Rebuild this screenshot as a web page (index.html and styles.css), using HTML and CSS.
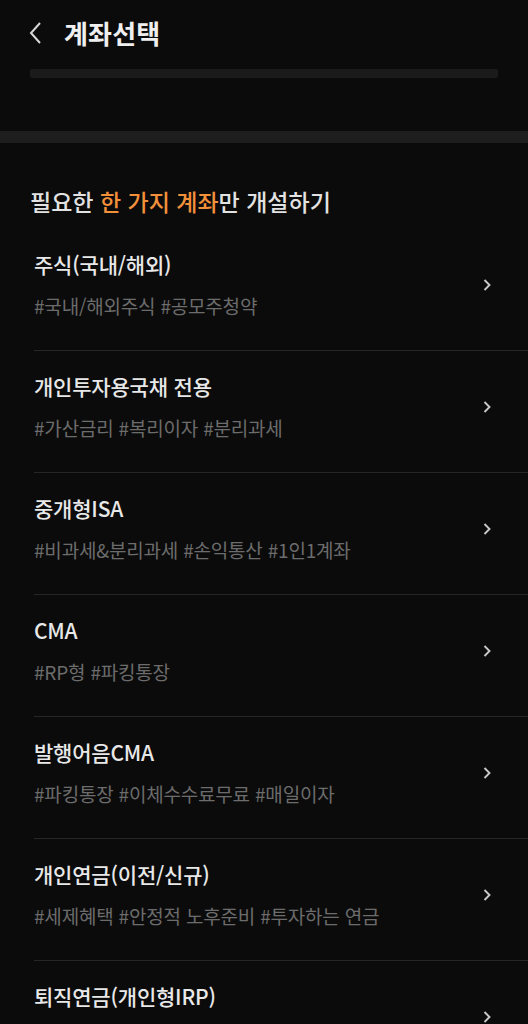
FILE: index.html
```html
<!DOCTYPE html>
<html lang="ko">
<head>
<meta charset="utf-8">
<title>계좌선택</title>
<link rel="stylesheet" href="styles.css">
</head>
<body>
<header class="top">
  <div class="top-row">
    <svg class="back" width="16" height="24" viewBox="0 0 16 24"><polyline points="12,2 3,12 12,22" fill="none" stroke="#d8d8d8" stroke-width="2"/></svg>
    <h1 class="title">계좌선택</h1>
  </div>
  <div class="progress"></div>
</header>
<div class="sep"></div>
<main class="content">
  <h2 class="heading">필요한 <span class="hl">한 가지 계좌</span>만 개설하기</h2>
  <ul class="list">
    <li class="item"><div class="txt"><div class="name">주식(국내/해외)</div><div class="tags">#국내/해외주식 #공모주청약</div></div><svg class="chev" width="10" height="14" viewBox="0 0 10 14"><polyline points="2.5,2 7.5,7 2.5,12" fill="none" stroke="#c8c8c8" stroke-width="1.9"/></svg></li>
    <li class="item"><div class="txt"><div class="name">개인투자용국채 전용</div><div class="tags">#가산금리 #복리이자 #분리과세</div></div><svg class="chev" width="10" height="14" viewBox="0 0 10 14"><polyline points="2.5,2 7.5,7 2.5,12" fill="none" stroke="#c8c8c8" stroke-width="1.9"/></svg></li>
    <li class="item"><div class="txt"><div class="name">중개형ISA</div><div class="tags">#비과세&amp;분리과세 #손익통산 #1인1계좌</div></div><svg class="chev" width="10" height="14" viewBox="0 0 10 14"><polyline points="2.5,2 7.5,7 2.5,12" fill="none" stroke="#c8c8c8" stroke-width="1.9"/></svg></li>
    <li class="item"><div class="txt"><div class="name">CMA</div><div class="tags">#RP형 #파킹통장</div></div><svg class="chev" width="10" height="14" viewBox="0 0 10 14"><polyline points="2.5,2 7.5,7 2.5,12" fill="none" stroke="#c8c8c8" stroke-width="1.9"/></svg></li>
    <li class="item"><div class="txt"><div class="name">발행어음CMA</div><div class="tags">#파킹통장 #이체수수료무료 #매일이자</div></div><svg class="chev" width="10" height="14" viewBox="0 0 10 14"><polyline points="2.5,2 7.5,7 2.5,12" fill="none" stroke="#c8c8c8" stroke-width="1.9"/></svg></li>
    <li class="item"><div class="txt"><div class="name">개인연금(이전/신규)</div><div class="tags">#세제혜택 #안정적 노후준비 #투자하는 연금</div></div><svg class="chev" width="10" height="14" viewBox="0 0 10 14"><polyline points="2.5,2 7.5,7 2.5,12" fill="none" stroke="#c8c8c8" stroke-width="1.9"/></svg></li>
    <li class="item"><div class="txt"><div class="name">퇴직연금(개인형IRP)</div></div><svg class="chev" width="10" height="14" viewBox="0 0 10 14"><polyline points="2.5,2 7.5,7 2.5,12" fill="none" stroke="#c8c8c8" stroke-width="1.9"/></svg></li>
  </ul>
</main>
</body>
</html>
```

FILE: styles.css
```css
* { box-sizing: border-box; }
html, body {
  margin: 0;
  padding: 0;
  background: #0b0b0b;
  font-family: "Noto Sans CJK KR", "Noto Sans", sans-serif;
  color: #e6e6e6;
  overflow: hidden;
  height: 1024px;
}
.top { padding: 16px 30px 0 28px; }
.top-row {
  display: flex;
  align-items: center;
  gap: 20px;
  height: 34px;
}
.back { flex: none; }
.title {
  margin: 0;
  font-size: 26px;
  line-height: 34px;
  font-weight: 700;
  color: #efefef;
  letter-spacing: 0.2px;
}
.progress {
  margin: 19px 0 0 2px;
  height: 9px;
  background: #1b1b1b;
  border-radius: 2px;
}
.sep {
  margin-top: 53px;
  height: 12px;
  background: #1e1e1e;
}
.content { padding: 43px 0 0 30px; }
.heading {
  margin: 0 0 13px;
  font-size: 23px;
  line-height: 30px;
  font-weight: 500;
  color: #e2e2e2;
  letter-spacing: 0;
}
.hl { color: #f3903a; }
.list { list-style: none; margin: 0; padding: 0 0 0 4px; }
.item {
  display: grid;
  grid-template-columns: 1fr auto;
  align-items: center;
  min-height: 122px;
  padding: 21px 36px 31px 0;
  border-bottom: 1px solid #262626;
}
.txt {
  align-self: start;
  display: flex;
  flex-direction: column;
  gap: 15px;
}
.name {
  font-size: 21px;
  line-height: 28px;
  font-weight: 500;
  color: #e8e8e8;
  letter-spacing: -0.2px;
}
.tags {
  font-size: 19px;
  line-height: 26px;
  color: #6c6c6c;
  letter-spacing: -0.2px;
}
.chev { flex: none; }
```
